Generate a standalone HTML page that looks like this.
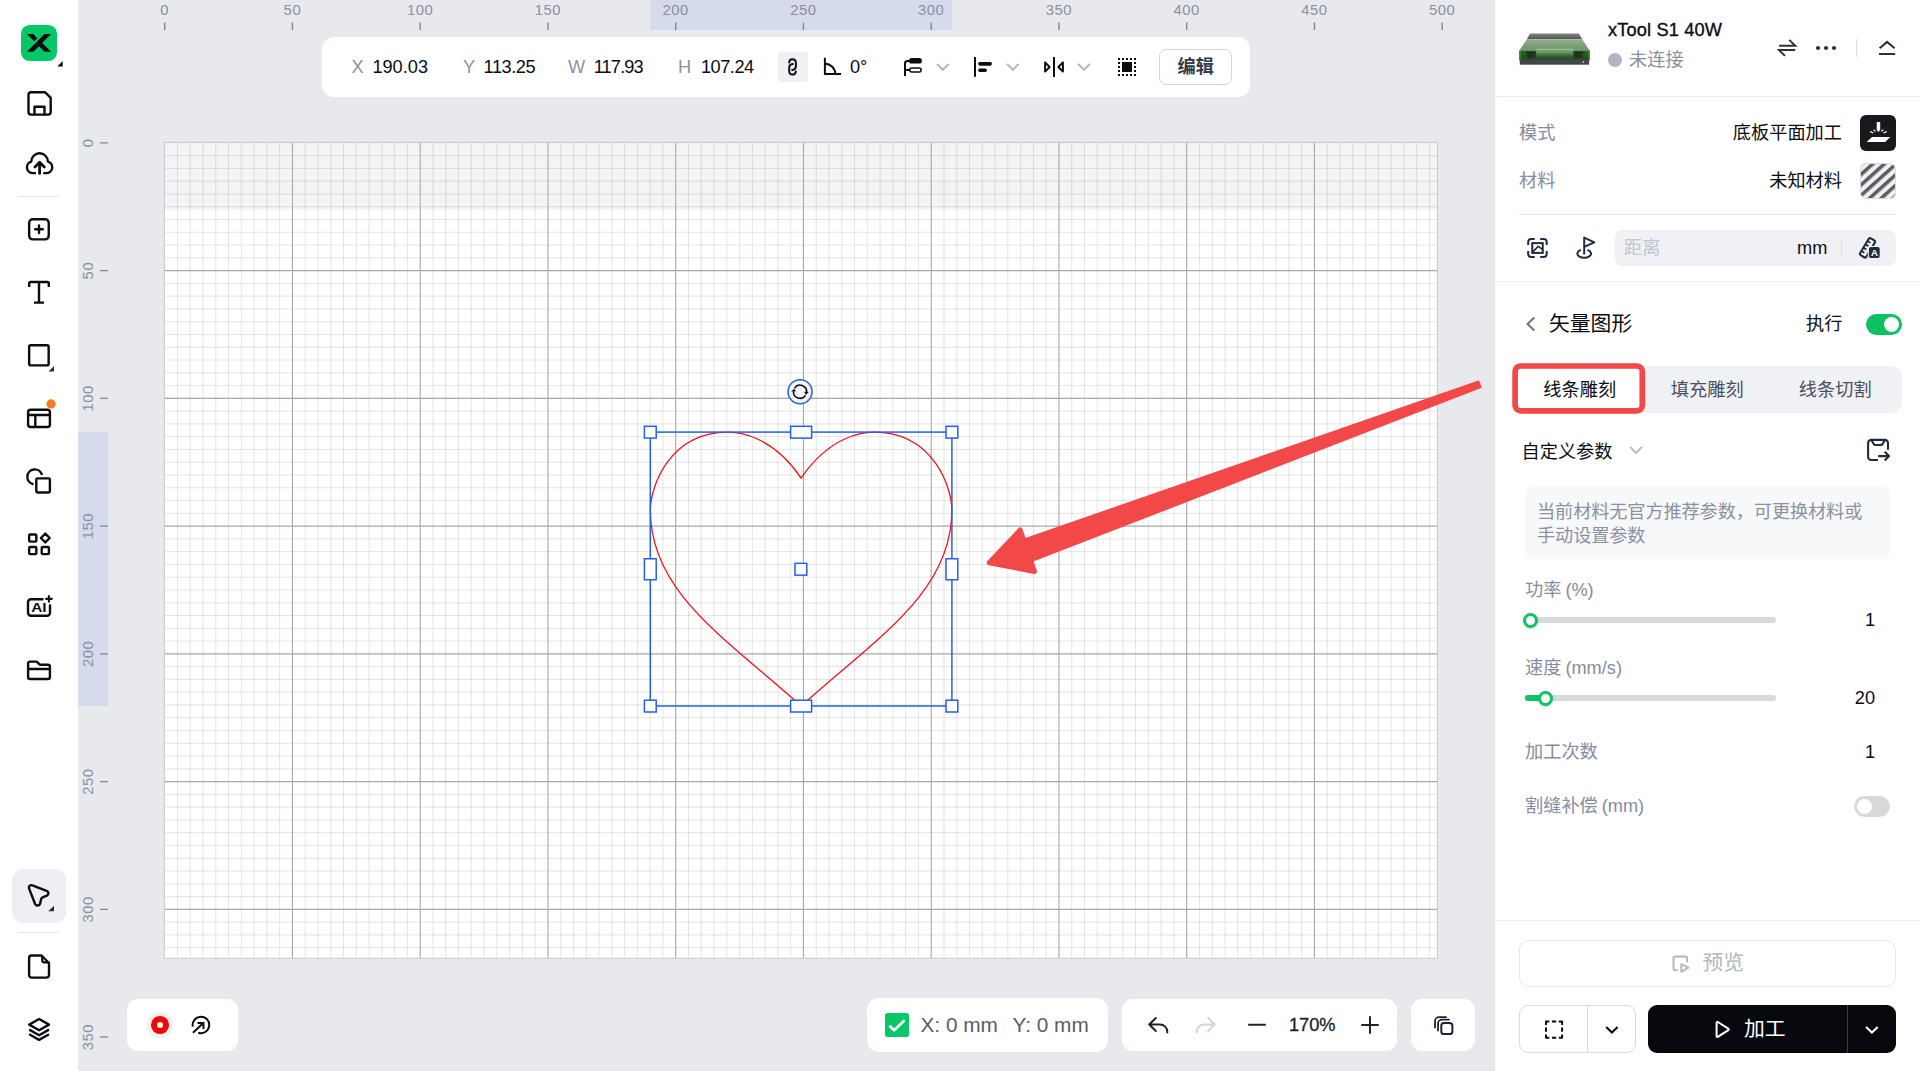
<!DOCTYPE html>
<html lang="zh-CN">
<head>
<meta charset="utf-8">
<title>xTool Creative Space</title>
<style>
*{box-sizing:border-box;margin:0;padding:0}
html,body{width:1920px;height:1071px;overflow:hidden;background:#e8e9ed}
body{font-family:"Liberation Sans","Noto Sans CJK SC",sans-serif;color:#0b0d12;font-size:18px;position:relative}
#app{position:absolute;left:0;top:0;width:1920px;height:1071px;overflow:hidden;background:#e8e9ed}
.abs{position:absolute}
.t{position:absolute;white-space:nowrap;line-height:24px;height:24px}
svg{position:absolute;overflow:visible}
.ic{fill:none;stroke:#0b0d12;stroke-width:2.4;stroke-linecap:round;stroke-linejoin:round}
/* sidebar */
#side{position:absolute;left:0;top:0;width:78px;height:1071px;background:#fff}
/* toolbar */
#tb{position:absolute;left:322px;top:37px;width:928px;height:60px;background:#fff;border-radius:12px}
.lab{color:#8a91a3}
.box{position:absolute;background:#fff;border-radius:12px}
/* panel */
#panel{position:absolute;left:1494px;top:0;width:426px;height:1071px;background:#fff;border-left:1px solid #e3e4e7}
.gray{color:#858c9e}
.hr{position:absolute;height:1px;background:#e9eaf0}
</style>
</head>
<body>
<div id="app">
<svg id="cv" width="1920" height="1071" viewBox="0 0 1920 1071" style="left:0;top:0">
<rect x="650.3" y="0" width="301.6" height="30" fill="#d5daec"/>
<rect x="78" y="432.1" width="30" height="273.9" fill="#d5daec"/>
<rect x="164.4" y="142.4" width="1273.05" height="815.9" fill="#fff"/>
<rect x="164.4" y="142.4" width="1273.05" height="67.5" fill="#f3f4f6"/>
<path d="M177.47 142.85V957.90M190.25 142.85V957.90M203.02 142.85V957.90M215.80 142.85V957.90M228.57 142.85V957.90M241.35 142.85V957.90M254.12 142.85V957.90M266.90 142.85V957.90M279.68 142.85V957.90M305.23 142.85V957.90M318.00 142.85V957.90M330.77 142.85V957.90M343.55 142.85V957.90M356.32 142.85V957.90M369.10 142.85V957.90M381.88 142.85V957.90M394.65 142.85V957.90M407.43 142.85V957.90M432.98 142.85V957.90M445.75 142.85V957.90M458.53 142.85V957.90M471.30 142.85V957.90M484.07 142.85V957.90M496.85 142.85V957.90M509.62 142.85V957.90M522.40 142.85V957.90M535.17 142.85V957.90M560.73 142.85V957.90M573.50 142.85V957.90M586.28 142.85V957.90M599.05 142.85V957.90M611.83 142.85V957.90M624.60 142.85V957.90M637.38 142.85V957.90M650.15 142.85V957.90M662.92 142.85V957.90M688.47 142.85V957.90M701.25 142.85V957.90M714.03 142.85V957.90M726.80 142.85V957.90M739.58 142.85V957.90M752.35 142.85V957.90M765.12 142.85V957.90M777.90 142.85V957.90M790.67 142.85V957.90M816.23 142.85V957.90M829.00 142.85V957.90M841.78 142.85V957.90M854.55 142.85V957.90M867.33 142.85V957.90M880.10 142.85V957.90M892.88 142.85V957.90M905.65 142.85V957.90M918.42 142.85V957.90M943.98 142.85V957.90M956.75 142.85V957.90M969.53 142.85V957.90M982.30 142.85V957.90M995.08 142.85V957.90M1007.85 142.85V957.90M1020.62 142.85V957.90M1033.40 142.85V957.90M1046.17 142.85V957.90M1071.73 142.85V957.90M1084.50 142.85V957.90M1097.28 142.85V957.90M1110.05 142.85V957.90M1122.83 142.85V957.90M1135.60 142.85V957.90M1148.38 142.85V957.90M1161.15 142.85V957.90M1173.92 142.85V957.90M1199.48 142.85V957.90M1212.25 142.85V957.90M1225.03 142.85V957.90M1237.80 142.85V957.90M1250.58 142.85V957.90M1263.35 142.85V957.90M1276.13 142.85V957.90M1288.90 142.85V957.90M1301.68 142.85V957.90M1327.23 142.85V957.90M1340.00 142.85V957.90M1352.78 142.85V957.90M1365.55 142.85V957.90M1378.33 142.85V957.90M1391.10 142.85V957.90M1403.88 142.85V957.90M1416.65 142.85V957.90M1429.43 142.85V957.90" stroke="#14141e" stroke-opacity="0.108" stroke-width="1" fill="none"/>
<path d="M164.70 155.62H1437.09M164.70 168.40H1437.09M164.70 181.18H1437.09M164.70 193.95H1437.09M164.70 206.72H1437.09M164.70 219.50H1437.09M164.70 232.28H1437.09M164.70 245.05H1437.09M164.70 257.82H1437.09M164.70 283.38H1437.09M164.70 296.15H1437.09M164.70 308.93H1437.09M164.70 321.70H1437.09M164.70 334.48H1437.09M164.70 347.25H1437.09M164.70 360.02H1437.09M164.70 372.80H1437.09M164.70 385.58H1437.09M164.70 411.12H1437.09M164.70 423.90H1437.09M164.70 436.68H1437.09M164.70 449.45H1437.09M164.70 462.23H1437.09M164.70 475.00H1437.09M164.70 487.77H1437.09M164.70 500.55H1437.09M164.70 513.33H1437.09M164.70 538.88H1437.09M164.70 551.65H1437.09M164.70 564.43H1437.09M164.70 577.20H1437.09M164.70 589.98H1437.09M164.70 602.75H1437.09M164.70 615.52H1437.09M164.70 628.30H1437.09M164.70 641.08H1437.09M164.70 666.62H1437.09M164.70 679.40H1437.09M164.70 692.18H1437.09M164.70 704.95H1437.09M164.70 717.73H1437.09M164.70 730.50H1437.09M164.70 743.28H1437.09M164.70 756.05H1437.09M164.70 768.83H1437.09M164.70 794.38H1437.09M164.70 807.15H1437.09M164.70 819.93H1437.09M164.70 832.70H1437.09M164.70 845.48H1437.09M164.70 858.25H1437.09M164.70 871.03H1437.09M164.70 883.80H1437.09M164.70 896.58H1437.09M164.70 922.13H1437.09M164.70 934.90H1437.09M164.70 947.68H1437.09" stroke="#14141e" stroke-opacity="0.108" stroke-width="1" fill="none"/>
<path d="M292.45 142.85V957.90M420.20 142.85V957.90M547.95 142.85V957.90M675.70 142.85V957.90M803.45 142.85V957.90M931.20 142.85V957.90M1058.95 142.85V957.90M1186.70 142.85V957.90M1314.45 142.85V957.90M164.70 270.60H1437.09M164.70 398.35H1437.09M164.70 526.10H1437.09M164.70 653.85H1437.09M164.70 781.60H1437.09M164.70 909.35H1437.09" stroke="#a6a7ab" stroke-width="1.1" fill="none"/>
<rect x="164.4" y="142.4" width="1273.05" height="815.9" fill="none" stroke="#c9ccd0" stroke-width="1.1"/>
<path d="M164.70 22.5V30M292.45 22.5V30M420.20 22.5V30M547.95 22.5V30M675.70 22.5V30M803.45 22.5V30M931.20 22.5V30M1058.95 22.5V30M1186.70 22.5V30M1314.45 22.5V30M1442.20 22.5V30M100 142.85H108M100 270.60H108M100 398.35H108M100 526.10H108M100 653.85H108M100 781.60H108M100 909.35H108M100 1037.10H108" stroke="#7f8696" stroke-width="1.4" fill="none"/>
<g font-family="Liberation Sans, sans-serif" font-size="14.8" letter-spacing="0.6" fill="#8a91a2" text-anchor="middle">
<text x="164.70" y="15">0</text>
<text x="292.45" y="15">50</text>
<text x="420.20" y="15">100</text>
<text x="547.95" y="15">150</text>
<text x="675.70" y="15">200</text>
<text x="803.45" y="15">250</text>
<text x="931.20" y="15">300</text>
<text x="1058.95" y="15">350</text>
<text x="1186.70" y="15">400</text>
<text x="1314.45" y="15">450</text>
<text x="1442.20" y="15">500</text>
<text transform="translate(92.8 142.85) rotate(-90)" x="0" y="0">0</text>
<text transform="translate(92.8 270.60) rotate(-90)" x="0" y="0">50</text>
<text transform="translate(92.8 398.35) rotate(-90)" x="0" y="0">100</text>
<text transform="translate(92.8 526.10) rotate(-90)" x="0" y="0">150</text>
<text transform="translate(92.8 653.85) rotate(-90)" x="0" y="0">200</text>
<text transform="translate(92.8 781.60) rotate(-90)" x="0" y="0">250</text>
<text transform="translate(92.8 909.35) rotate(-90)" x="0" y="0">300</text>
<text transform="translate(92.8 1037.10) rotate(-90)" x="0" y="0">350</text>
</g>
<path id="heart" d="M801.1 478.2C772 435.1 738 432.2 728 432.2C668 432.2 650.3 489 650.3 510C650.3 592 724.5 637.1 801.1 706C877.7 637.1 951.9 592 951.9 510C951.9 489 934.2 432.2 874.2 432.2C864.2 432.2 830.2 435.1 801.1 478.2Z" fill="none" stroke="#f50f16" stroke-width="1.25"/>
<rect x="650.3" y="432.1" width="301.60" height="273.90" fill="none" stroke="#2560ea" stroke-width="1.5"/>
<rect x="644.40" y="426.30" width="11.8" height="11.8" fill="#fff" stroke="#2560ea" stroke-width="1.5"/>
<rect x="644.40" y="700.20" width="11.8" height="11.8" fill="#fff" stroke="#2560ea" stroke-width="1.5"/>
<rect x="946.00" y="426.30" width="11.8" height="11.8" fill="#fff" stroke="#2560ea" stroke-width="1.5"/>
<rect x="946.00" y="700.20" width="11.8" height="11.8" fill="#fff" stroke="#2560ea" stroke-width="1.5"/>
<rect x="790.60" y="426.30" width="21" height="11.8" fill="#fff" stroke="#2560ea" stroke-width="1.5"/>
<rect x="790.60" y="700.20" width="21" height="11.8" fill="#fff" stroke="#2560ea" stroke-width="1.5"/>
<rect x="644.40" y="558.75" width="11.8" height="21" fill="#fff" stroke="#2560ea" stroke-width="1.5"/>
<rect x="946.00" y="558.75" width="11.8" height="21" fill="#fff" stroke="#2560ea" stroke-width="1.5"/>
<rect x="795.00" y="563.35" width="11.8" height="11.8" fill="#fff" stroke="#2560ea" stroke-width="1.5"/>
<circle cx="800.05" cy="391.7" r="12" fill="#f5f5f5" stroke="#2560ea" stroke-width="1.5"/>
<g fill="none" stroke="#0d0f14" stroke-width="1.6"><path d="M794.58 388.01A6.6 6.6 0 0 1 806.64 392.05"/><path d="M805.52 395.39A6.6 6.6 0 0 1 793.46 391.35"/></g>
<polygon points="804.25,391.85 808.84,392.01 805.77,395.00" fill="#0d0f14"/>
<polygon points="795.85,391.55 791.26,391.39 794.33,388.40" fill="#0d0f14"/>
</svg>
<div id="side">
<svg width="78" height="1071" viewBox="0 0 78 1071" style="left:0;top:0">
  <!-- logo -->
  <rect x="21" y="24.9" width="36" height="36" rx="8.6" fill="#04c868"/>
  <g fill="#0a0b0f">
    <polygon points="26.85,51.8 33.4,51.8 51.05,34.1 44.5,34.1"/>
    <polygon points="26.85,34.1 33.4,34.1 37.2,38.4 34.2,41.2"/>
    <polygon points="41.95,42.7 51.05,51.8 44.5,51.8 38.7,46"/>
    <polygon points="62.7,61 62.7,66.4 57.3,66.4"/>
  </g>
  <g class="ic" stroke-width="2.5">
    <!-- save -->
    <path d="M31 92.3H45.2L50.7 97.8V112.1a2.5 2.5 0 0 1-2.5 2.5H31a2.5 2.5 0 0 1-2.5-2.5V94.8a2.5 2.5 0 0 1 2.5-2.5Z"/>
    <path d="M34.5 114.3V106.8H44.5V114.3"/>
    <!-- cloud upload -->
    <path d="M35 173.100h-2.600a5.850 5.850 0 0 1-1.100-11.500a8.300 8.300 0 0 1 16.600 0a5.850 5.850 0 0 1-1.100 11.500h-2.600"/>
    <path d="M39.600 173.400V162.800M34.900 166.900l4.700-4.700 4.700 4.700" stroke-width="2.800"/>
    <!-- plus square -->
    <rect x="29.15" y="219.3" width="19.6" height="20.1" rx="3.6"/>
    <path d="M35.2 229.3H42.8M39 225.5V233.1"/>
    <!-- T -->
    <path d="M29.2 287V283.5a1.5 1.5 0 0 1 1.5-1.5H47.3a1.5 1.5 0 0 1 1.5 1.5V287M39 282V302.6M34 302.6H44" stroke-linecap="butt"/>
    <!-- rect -->
    <rect x="29.15" y="345.2" width="19.5" height="20.2" rx="1.6"/>
    <!-- layout -->
    <rect x="28.100" y="409.700" width="21.800" height="17.300" rx="2.500"/>
    <path d="M28.1 415H49.9M35.3 415V427" stroke-linecap="butt"/>
    <!-- shapes -->
    <path d="M42 475A7.45 7.45 0 1 0 33.5 484.2" stroke-linecap="butt"/>
    <rect x="36.3" y="478.4" width="13.6" height="14.1" rx="1.2"/>
    <!-- apps -->
    <rect x="29.15" y="534.5" width="7.2" height="7.1" rx="1"/>
    <rect x="29.15" y="547" width="7.2" height="7.1" rx="1"/>
    <rect x="41.7" y="547" width="7.2" height="7.1" rx="1"/>
    <path d="M45.3 533.6L49.7 538L45.3 542.4L40.9 538Z"/>
    <!-- AI -->
    <path d="M42.5 599.3H31a3 3 0 0 0-3 3V612.8a3 3 0 0 0 3 3H47a3 3 0 0 0 3-3V605.5" />
    <path d="M48.900 596.100V601.700M46.100 598.900H51.700" stroke-width="2.100"/>
    <!-- folder -->
    <path d="M28.1 677V663.6a2 2 0 0 1 2-2H36a2 2 0 0 1 1.5.7L39.3 664.2a1.5 1.5 0 0 0 1.1.5H47.9a2 2 0 0 1 2 2V677a2 2 0 0 1-2 2H30.1a2 2 0 0 1-2-2ZM28.1 669H49.9"/>
  </g>
  <polygon points="54,366 54,371.5 48.5,371.5" fill="#2a2e38"/>
  <circle cx="51" cy="403.9" r="4.6" fill="#ff7a1f"/>
  <text x="31.2" y="612" font-family="Liberation Sans, sans-serif" font-weight="700" font-size="12.6" fill="#0b0d12" textLength="15.4" lengthAdjust="spacingAndGlyphs">AI</text>
  <rect x="18" y="196" width="42" height="1" fill="#e6e8f1"/>
  <!-- bottom -->
  <rect x="12" y="869" width="54" height="54" rx="11" fill="#eeeff4"/>
  <g class="ic" stroke-width="2.5">
    <path d="M32.400 885.400L46.600 890.800C48.800 891.700 49.200 894.600 46.900 895.700L42.600 897.400C41.800 897.700 41.400 898.200 41.200 899L40.100 903.600C39.500 906 36.200 906.300 35.100 904L29.100 888.600C28.200 886.300 30.200 884.500 32.400 885.400Z"/>
    <!-- file -->
    <path d="M31.6 955.5H41.5L49 963V975.1a2.5 2.5 0 0 1-2.5 2.5H31.6a2.5 2.5 0 0 1-2.5-2.5V958a2.5 2.5 0 0 1 2.5-2.500Z"/>
    <path d="M42.2 956V960.3a2 2 0 0 0 2 2H48.6" stroke-width="2.2"/>
    <!-- layers -->
    <path d="M39.1 1019L49 1024.6L39.1 1030.200L29.2 1024.6Z"/>
    <path d="M29.2 1029.6L39.1 1035.200L49 1029.6M29.2 1034.3L39.1 1039.900L49 1034.3" stroke-linecap="butt"/>
  </g>
  <polygon points="54,905.700 54,911.3 48.2,911.3" fill="#2a2e38"/>
  <rect x="18" y="932" width="42" height="1" fill="#e6e8f1"/>
</svg>
</div>
<div id="tb"></div>
<div id="tbtxt" style="position:absolute;left:0;top:0;font-size:18.2px">
  <span class="t lab" style="left:351.5px;top:55px">X</span><span class="t" style="left:372.400px;top:55px">190.03</span>
  <span class="t lab" style="left:463px;top:55px">Y</span><span class="t" style="left:483.600px;top:55px;letter-spacing:-0.45px">113.25</span>
  <span class="t lab" style="left:568px;top:55px">W</span><span class="t" style="left:593.700px;top:55px;letter-spacing:-0.85px">117.93</span>
  <span class="t lab" style="left:678px;top:55px">H</span><span class="t" style="left:701px;top:55px;letter-spacing:-0.5px">107.24</span>
  <span class="t" style="left:850px;top:55px">0°</span>
</div>
<div class="abs" style="left:778px;top:52px;width:30px;height:30px;border-radius:4px;background:#eff0f4"></div>
<div class="abs" style="left:1159px;top:49px;width:73px;height:36px;border-radius:7px;border:1px solid #d3d6de;background:#fff"></div>
<span class="t" style="left:1177.5px;top:55px;font-size:18.2px;font-weight:700;color:#333a49">编辑</span>
<svg width="1920" height="110" viewBox="0 0 1920 110" style="left:0;top:0">
  <g fill="none" stroke="#0b0d12" stroke-width="2" stroke-linecap="round" stroke-linejoin="round">
    <!-- link -->
    <path d="M789.2 62.6C789.2 60.4 790.8 59.300 792.5 59.300C794.6 59.300 795.9 60.8 795.9 63V66C795.9 68.3 794.3 69.8 792.2 69.9"/>
    <path d="M795.8 71.4C795.8 73.2 794.3 74.6 792.5 74.6C790.4 74.6 789.2 73 789.2 70.8V67.8C789.2 65.6 790.8 64.1 792.9 64"/>
    <!-- angle -->
    <path d="M824.9 57.8V74.1H841.1" stroke-linecap="butt" stroke-linejoin="miter"/>
    <path d="M824.9 63.7A10.4 10.4 0 0 1 835.3 74.1" stroke-linecap="butt"/>
    <!-- layer order -->
    <path d="M905 75.9V63.6a2.500 2.500 0 0 1 2.500-2.500H910M905 70H910" stroke-linecap="butt"/>
    <rect x="909.750" y="67.950" width="11.400" height="4.050" rx="2" stroke-width="1.500"/>
    <!-- align -->
    <path d="M975 57V76.800" stroke-linecap="butt"/>
    <path d="M979.900 63.850H990.200M979.900 70.300H985.200" stroke-width="3.600"/>
    <!-- mirror -->
    <path d="M1054 57V76.900" stroke-linecap="butt"/>
    <path d="M1045.100 62.400V71.600L1049.600 67ZM1062.900 62.400V71.600L1058.400 67Z" stroke-linejoin="round"/>
  </g>
  <rect x="909" y="58.100" width="12.900" height="5.500" rx="2.700" fill="#0b0d12"/>
  <g fill="none" stroke="#b3b6be" stroke-width="2" stroke-linecap="butt" stroke-linejoin="miter">
    <path d="M937 63.900L942.900 69.800L948.800 63.900"/>
    <path d="M1007 63.900L1012.900 69.800L1018.800 63.900"/>
    <path d="M1078.100 63.900L1084 69.800L1089.900 63.900"/>
  </g>
  <!-- select all -->
  <rect x="1122" y="62" width="10" height="10" fill="#0b0d12"/>
  <rect x="1119" y="59" width="16" height="16" fill="none" stroke="#0b0d12" stroke-width="2" stroke-dasharray="2 2" stroke-dashoffset="1"/>
</svg>
<div class="box" style="left:127px;top:999px;width:111px;height:52px;border-radius:11px"></div>
<div class="box" style="left:867px;top:998px;width:241px;height:54px;border-radius:12px"></div>
<div class="box" style="left:1122px;top:999px;width:275px;height:52px;border-radius:11px"></div>
<div class="box" style="left:1411px;top:999px;width:64px;height:52px;border-radius:11px"></div>
<span class="t" style="left:920.5px;top:1012.5px;font-size:20.8px;color:#595e6b">X: 0 mm</span>
<span class="t" style="left:1012.5px;top:1012.5px;font-size:20.8px;color:#595e6b">Y: 0 mm</span>
<span class="t" style="left:1289px;top:1012.8px;font-size:18.2px;color:#1b1f2a;-webkit-text-stroke:0.3px #1b1f2a">170%</span>
<svg width="1920" height="80" viewBox="0 991 1920 80" style="left:0;top:991px">
  <circle cx="160" cy="1025" r="13.2" fill="#eef0f4"/>
  <circle cx="160" cy="1025" r="6.05" fill="#fff" stroke="#ff0000" stroke-width="6"/>
  <g fill="none" stroke="#0b0d12" stroke-width="2" stroke-linecap="butt" stroke-linejoin="miter">
    <path d="M198.300 1032.800A8.300 8.300 0 1 0 192.800 1026.600"/>
    <path d="M193 1032.800L203.300 1023.100M197.500 1022.900H203.500V1028.900"/>
  </g>
  <rect x="885" y="1013" width="24" height="24" rx="2.500" fill="#08c766"/>
  <path d="M890 1026.300L894.200 1030.300L903.800 1021" fill="none" stroke="#fff" stroke-width="2.600" stroke-linecap="round" stroke-linejoin="round"/>
  <g fill="none" stroke="#1e2330" stroke-width="2" stroke-linecap="round" stroke-linejoin="round">
    <path d="M1155.800 1018L1149.200 1024.500L1155.800 1031M1149.600 1024.500H1160a7.300 7.300 0 0 1 7.300 7.300V1032.600"/>
    <path d="M1249 1024.800H1265M1362 1025H1378M1370 1017V1033"/>
    <rect x="1441.300" y="1022.900" width="11.100" height="11.100" rx="2.600"/>
    <path d="M1438 1030.500V1023.600a4 4 0 0 1 4-4H1449M1435 1027.500V1021.200a4 4 0 0 1 4-4H1446" stroke-width="1.800"/>
  </g>
  <path d="M1208.200 1018L1214.800 1024.500L1208.200 1031M1214.400 1024.500H1204a7.300 7.300 0 0 0-7.300 7.300V1032.600" fill="none" stroke="#d0d3d9" stroke-width="2" stroke-linecap="round" stroke-linejoin="round"/>
</svg>
<div id="panel"></div>
<!-- header -->
<svg width="80" height="40" viewBox="1515 29 80 40" style="left:1515px;top:29px">
  <defs>
    <linearGradient id="dg0" x1="0" y1="0" x2="0" y2="1"><stop offset="0" stop-color="#828282"/><stop offset="1" stop-color="#565656"/></linearGradient>
    <linearGradient id="dg1" x1="0" y1="0" x2="0" y2="1"><stop offset="0" stop-color="#93b38e"/><stop offset="0.600" stop-color="#7d9d78"/><stop offset="1" stop-color="#6f9a69"/></linearGradient>
    <linearGradient id="dg2" x1="0" y1="0" x2="0" y2="1"><stop offset="0" stop-color="#2c5f28"/><stop offset="1" stop-color="#244a21"/></linearGradient>
    <linearGradient id="dg3" x1="0" y1="0" x2="0" y2="1"><stop offset="0" stop-color="#7fae79"/><stop offset="0.350" stop-color="#4f7d4a"/><stop offset="0.700" stop-color="#2c5528"/><stop offset="1" stop-color="#2a4f27"/></linearGradient>
  </defs>
  <polygon points="1530,33.600 1579,33.600 1582.100,39.100 1527,39.100" fill="url(#dg0)"/>
  <polygon points="1527,39 1582.100,39 1589.800,50.800 1519.200,50.800" fill="url(#dg1)"/>
  <rect x="1527.500" y="39" width="54" height="0.900" fill="#a9c7a4"/>
  <rect x="1536.200" y="48.800" width="37.200" height="2" fill="#93c08c"/>
  <rect x="1519.200" y="50.600" width="70.600" height="9.800" fill="url(#dg2)"/>
  <rect x="1536.200" y="50.600" width="37.200" height="9.600" fill="url(#dg3)"/>
  <rect x="1519.200" y="50.600" width="1.400" height="9.800" fill="#3f9a38"/>
  <rect x="1588.400" y="50.600" width="1.400" height="9.800" fill="#3f9a38"/>
  <polygon points="1526,51.500 1536,51.500 1534.500,58 1527.500,58" fill="#20331f"/>
  <polygon points="1573.500,51.500 1583.500,51.500 1582,58 1575,58" fill="#20331f"/>
  <rect x="1519.800" y="60" width="69.300" height="4.700" fill="#444546"/>
  <rect x="1582.700" y="61.400" width="1.400" height="1.400" fill="#e4e6e8"/>
</svg>
<span class="t" style="left:1608px;top:17.500px;font-size:18.200px;letter-spacing:0.150px;-webkit-text-stroke:0.350px #0b0d12">xTool S1 40W</span>
<div class="abs" style="left:1608.300px;top:53.300px;width:14px;height:14px;border-radius:50%;background:#b1b6c3"></div>
<span class="t" style="left:1629px;top:48px;font-size:18.200px;color:#8a90a0">未连接</span>
<svg width="140" height="40" viewBox="1770 30 140 40" style="left:1770px;top:30px">
  <g fill="none" stroke="#2a3040" stroke-width="2" stroke-linecap="butt" stroke-linejoin="miter">
    <path d="M1779.100 45.700H1795.200L1789.300 39.900M1795.200 50.100H1779.100L1785 55.900"/>
    <path d="M1879.600 48.300L1887.100 41.900L1894.600 48.300M1879 53.900H1895.100"/>
  </g>
  <circle cx="1818" cy="48" r="2" fill="#2a3040"/><circle cx="1826" cy="48" r="2" fill="#2a3040"/><circle cx="1834" cy="48" r="2" fill="#2a3040"/>
  <rect x="1856" y="39" width="1" height="18" fill="#d9dbe3"/>
</svg>
<div class="hr" style="left:1495px;top:96px;width:425px"></div>
<!-- mode / material -->
<span class="t gray" style="left:1519px;top:121px;font-size:18.200px">模式</span>
<span class="t" style="right:78px;top:121px;font-size:18.200px">底板平面加工</span>
<div class="abs" style="left:1860px;top:115px;width:36px;height:36px;border-radius:6px;background:#18181d"></div>
<svg width="36" height="36" viewBox="1860 115 36 36" style="left:1860px;top:115px">
  <path d="M1876.700 122.400a.5.500 0 0 1 .5-.5h2.500a.5.500 0 0 1 .5.500V129.800L1878.450 132L1876.700 129.800Z" fill="#fff"/>
  <path d="M1872 137.100H1890.300L1885.200 142H1866.600Z" fill="#fff"/>
  <path d="M1873.600 129.700L1875.600 131.400M1870.200 131.600L1873.400 133M1883.300 129.700L1881.300 131.400M1886.700 131.600L1883.500 133" stroke="#fff" stroke-width="1.200" fill="none"/>
</svg>
<span class="t gray" style="left:1519px;top:168.500px;font-size:18.200px">材料</span>
<span class="t" style="right:78px;top:168.500px;font-size:18.200px">未知材料</span>
<svg width="36" height="36" viewBox="0 0 36 36" style="left:1860px;top:163px">
  <defs>
    <pattern id="hatch" patternUnits="userSpaceOnUse" width="7.800" height="7.800" patternTransform="translate(-0.500 0) rotate(-42)"><rect x="0" y="0" width="7.800" height="3.500" fill="#5b5b60"/></pattern>
    <clipPath id="hc"><rect x="0.300" y="0.300" width="35.400" height="35.400" rx="6"/></clipPath>
  </defs>
  <rect x="0.300" y="0.300" width="35.400" height="35.400" rx="6" fill="#efeff4"/>
  <rect x="0" y="0" width="36" height="36" fill="url(#hatch)" clip-path="url(#hc)"/>
  <rect x="0.500" y="0.500" width="35" height="35" rx="6" fill="none" stroke="#dcdde3" stroke-width="1"/>
</svg>
<div class="hr" style="left:1519px;top:214px;width:377px;background:#e6e7ee"></div>
<!-- distance row -->
<div class="abs" style="left:1615px;top:230px;width:281px;height:36px;border-radius:7px;background:#f0f1f5"></div>
<span class="t" style="left:1624px;top:236px;font-size:18.200px;color:#c2c5cd">距离</span>
<span class="t" style="left:1797px;top:236px;font-size:18.200px;color:#0b0d12">mm</span>
<div class="abs" style="left:1841px;top:239px;width:1px;height:18px;background:#dcdeea"></div>
<svg width="400" height="44" viewBox="1515 226 400 44" style="left:1515px;top:226px">
  <g fill="none" stroke="#232a3a" stroke-width="2" stroke-linecap="butt" stroke-linejoin="round">
    <path d="M1528.200 245V242.100a3 3 0 0 1 3-3H1534.700M1540.200 239.100H1543.700a3 3 0 0 1 3 3V245M1546.700 251V253.900a3 3 0 0 1-3 3H1540.200M1534.700 256.900H1531.200a3 3 0 0 1-3-3V251"/>
    <rect x="1532.250" y="243.100" width="10.500" height="9.800" stroke-linejoin="miter"/>
    <path d="M1533 251.600L1538.200 246.400L1542.500 249.400" stroke-width="1.600"/>
    <path d="M1584.200 254.500V237.600L1594.300 242.300L1584.200 246.800" stroke-linejoin="round"/>
    <path d="M1580.300 250.200A6.800 4.200 0 1 0 1588.100 250.200" stroke-linecap="round"/>
    <g transform="rotate(31 1867.500 247.800)">
      <rect x="1863.900" y="238" width="7.200" height="19.600" rx="1.600" stroke-width="2.100"/>
      <path d="M1863.900 242H1867.400M1863.900 245.900H1867.400M1863.900 249.800H1867.400M1863.900 253.700H1867.400" stroke-width="1.800"/>
    </g>
  </g>
  <rect x="1867.800" y="245.900" width="12.900" height="12.900" rx="2.800" fill="#f0f1f5"/>
  <rect x="1868.900" y="247" width="10.800" height="10.900" rx="1.900" fill="#232a3a"/>
  <text x="1874.350" y="255.800" text-anchor="middle" font-family="Liberation Sans, sans-serif" font-weight="700" font-size="9.600" fill="#fff">A</text>
</svg>
<div class="hr" style="left:1495px;top:281px;width:425px;background:#ededf2"></div>
<!-- vector section -->
<svg width="20" height="24" viewBox="1520 312 20 24" style="left:1520px;top:312px"><path d="M1534.300 317.600L1527.600 324L1534.300 330.400" fill="none" stroke="#70778a" stroke-width="2.100"/></svg>
<span class="t" style="left:1549px;top:311.500px;font-size:20.800px">矢量图形</span>
<span class="t" style="left:1806px;top:312px;font-size:18.200px">执行</span>
<div class="abs" style="left:1866.400px;top:314px;width:35.800px;height:20.800px;border-radius:10.400px;background:#0fc261"></div>
<div class="abs" style="left:1883.700px;top:316.600px;width:15.600px;height:15.600px;border-radius:50%;background:#fff"></div>
<!-- tabs -->
<div class="abs" style="left:1516px;top:366.300px;width:386px;height:47px;border-radius:10px;background:#f0f1f5"></div>
<div class="abs" style="left:1517px;top:368px;width:126.500px;height:43px;border-radius:7px;background:#fff;box-shadow:0 1px 4px rgba(30,35,60,.12)"></div>
<span class="t" style="left:1516px;width:127.500px;text-align:center;top:378px;font-size:18.200px">线条雕刻</span>
<span class="t" style="left:1643.500px;width:127.500px;text-align:center;top:378px;font-size:18.200px;color:#4a5060">填充雕刻</span>
<span class="t" style="left:1771.500px;width:127.500px;text-align:center;top:378px;font-size:18.200px;color:#4a5060">线条切割</span>
<!-- custom params -->
<span class="t" style="left:1521.500px;top:439.500px;font-size:18.200px">自定义参数</span>
<svg width="400" height="40" viewBox="1515 432 400 40" style="left:1515px;top:432px">
  <path d="M1630.200 446.900L1636.100 452.800L1642 446.900" fill="none" stroke="#b5b8c0" stroke-width="1.900"/>
  <g fill="none" stroke="#232a3a" stroke-width="2.100" stroke-linecap="butt" stroke-linejoin="round">
    <path d="M1888 449.700V443a3.100 3.100 0 0 0-3.100-3.100H1871.200a3.100 3.100 0 0 0-3.100 3.100V456.900a3.100 3.100 0 0 0 3.100 3.100H1878"/>
    <path d="M1871.600 440.300L1873.700 444a2 2 0 0 0 1.700 1H1880.900a2 2 0 0 0 1.700-1L1884.700 440.300"/>
    <path d="M1878.200 456.100H1888.500M1884.700 451.800L1889 456.100L1884.700 460.600" stroke-linejoin="miter"/>
  </g>
</svg>
<div class="abs" style="left:1525px;top:486px;width:365px;height:73px;border-radius:9px;background:#f7f8fa"></div>
<span class="t" style="left:1537px;top:499.500px;font-size:18.200px;letter-spacing:-0.120px;color:#8b91a1">当前材料无官方推荐参数，可更换材料或</span>
<span class="t" style="left:1537px;top:523.500px;font-size:18.200px;letter-spacing:-0.120px;color:#8b91a1">手动设置参数</span>
<!-- power -->
<span class="t gray" style="left:1525px;top:577.500px;font-size:18.200px">功率<span style="margin-left:4px">(%)</span></span>
<div class="abs" style="left:1525px;top:617px;width:251px;height:6px;border-radius:3px;background:#d9dadf"></div>
<div class="abs" style="left:1522.500px;top:612.600px;width:15px;height:15px;border-radius:50%;background:#fff;border:3px solid #10c466;box-shadow:0 1px 3px rgba(0,0,0,.18)"></div>
<span class="t" style="right:45px;top:608px;font-size:18.200px">1</span>
<!-- speed -->
<span class="t gray" style="left:1525px;top:655.500px;font-size:18.200px">速度<span style="margin-left:4px">(mm/s)</span></span>
<div class="abs" style="left:1525px;top:695px;width:251px;height:6px;border-radius:3px;background:#d9dadf"></div>
<div class="abs" style="left:1525px;top:695px;width:20px;height:6px;border-radius:3px;background:#10c466"></div>
<div class="abs" style="left:1537.500px;top:690.500px;width:15px;height:15px;border-radius:50%;background:#fff;border:3px solid #10c466;box-shadow:0 1px 3px rgba(0,0,0,.18)"></div>
<span class="t" style="right:45px;top:686px;font-size:18.200px">20</span>
<!-- passes -->
<span class="t gray" style="left:1525px;top:739.500px;font-size:18.200px">加工次数</span>
<span class="t" style="right:45px;top:739.500px;font-size:18.200px">1</span>
<!-- kerf -->
<span class="t gray" style="left:1525px;top:793.500px;font-size:18.200px">割缝补偿<span style="margin-left:4px">(mm)</span></span>
<div class="abs" style="left:1854px;top:796px;width:36px;height:20.800px;border-radius:10.400px;background:#d9d9d9"></div>
<div class="abs" style="left:1856.700px;top:798.600px;width:15.600px;height:15.600px;border-radius:50%;background:#fff"></div>
<!-- footer -->
<div class="hr" style="left:1495px;top:920px;width:425px;background:#ededf2"></div>
<div class="abs" style="left:1519px;top:939.500px;width:377px;height:47px;border-radius:10px;border:1px solid #e6e7ee;background:#fff"></div>
<span class="t" style="left:1702.500px;top:951px;font-size:20.800px;color:#b4b8c2">预览</span>
<div class="abs" style="left:1519px;top:1005px;width:117px;height:48px;border-radius:9px;border:1px solid #d9dbe3;background:#fff"></div>
<div class="abs" style="left:1587px;top:1005px;width:1px;height:48px;background:#d9dbe3"></div>
<div class="abs" style="left:1648px;top:1005px;width:248px;height:48px;border-radius:9px;background:#07090e"></div>
<div class="abs" style="left:1847px;top:1005px;width:1px;height:48px;background:#3a3d45"></div>
<span class="t" style="left:1744px;top:1017px;font-size:20.800px;color:#fff">加工</span>
<svg width="400" height="120" viewBox="1515 940 400 120" style="left:1515px;top:940px">
  <g fill="none" stroke="#b4b8c2" stroke-width="2" stroke-linejoin="round">
    <path d="M1687.100 962.200V958.600a2 2 0 0 0-2-2H1675.500a2 2 0 0 0-2 2V968.200a2 2 0 0 0 2 2H1677.800"/>
    <path d="M1681.300 964.200V971.800L1688.400 967.700Z"/>
  </g>
  <path d="M1546 1024.900V1021.600H1549.300M1551.900 1021.600H1556.200M1558.800 1021.600H1562.100V1024.900M1562.100 1027.500V1031.800M1562.100 1034.400V1037.700H1558.800M1556.200 1037.700H1551.900M1549.300 1037.700H1546V1034.400M1546 1031.800V1027.500" fill="none" stroke="#0b0d12" stroke-width="2" stroke-linejoin="round"/>
  <path d="M1606.200 1027L1611.900 1032.500L1617.600 1027" fill="none" stroke="#0b0d12" stroke-width="2.100"/>
  <path d="M1866.100 1027L1871.900 1032.500L1877.700 1027" fill="none" stroke="#fff" stroke-width="2.100"/>
  <path d="M1716.600 1022.700V1036.100a.8.800 0 0 0 1.200.700L1728.300 1030.100a.8.800 0 0 0 0-1.400L1717.800 1022a.8.800 0 0 0-1.200.700Z" fill="none" stroke="#fff" stroke-width="2" stroke-linejoin="round"/>
</svg>
<!-- annotations -->
<svg width="1920" height="1071" viewBox="0 0 1920 1071" style="left:0;top:0;pointer-events:none">
  <rect x="1515.100" y="366" width="127.200" height="44.800" rx="5.500" fill="none" stroke="#f24848" stroke-width="5.700"/>
  <path d="M1479 380.300L1481.800 387.800L1036.500 560.300L1030.900 562.350L1020.400 539.850L1026 537.800Z" fill="#f24848"/>
  <polygon points="989.240,562.720 1020.180,530.020 1034.430,571.520" fill="#f24848" stroke="#f24848" stroke-width="5" stroke-linejoin="round"/>
</svg>
</div>
</body>
</html>
